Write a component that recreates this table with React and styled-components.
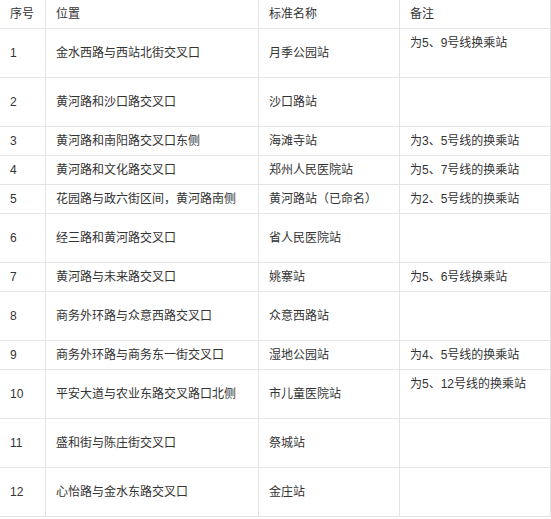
import React from 'react'
import styled, { createGlobalStyle } from 'styled-components'

const GlobalStyle = createGlobalStyle`
  html, body {
    margin: 0;
    padding: 0;
    background: #fff;
  }
  body {
    font-family: "Liberation Sans", "Noto Sans CJK SC", sans-serif;
    font-size: 12px;
    color: #333;
  }
`

const Table = styled.table`
  border-collapse: collapse;
  width: 550px;
  table-layout: fixed;
  margin-top: -1px;
  margin-left: -1px;
`

const Row = styled.tr`
  height: ${p => (p.$tall ? 49 : 29)}px;
`

const Cell = styled.td`
  border: 1px solid #e4e4e4;
  padding: 5px 10px;
  line-height: 18px;
  vertical-align: ${p => (p.$top ? 'top' : 'middle')};
  white-space: nowrap;
  overflow: hidden;
`

const HeadCell = styled(Cell).attrs({ as: 'th' })`
  font-weight: normal;
  text-align: left;
`

const rows = [
  ['1', '金水西路与西站北街交叉口', '月季公园站', '为5、9号线换乘站', true, true],
  ['2', '黄河路和沙口路交叉口', '沙口路站', '', true],
  ['3', '黄河路和南阳路交叉口东侧', '海滩寺站', '为3、5号线的换乘站'],
  ['4', '黄河路和文化路交叉口', '郑州人民医院站', '为5、7号线的换乘站'],
  ['5', '花园路与政六街区间，黄河路南侧', '黄河路站（已命名）', '为2、5号线的换乘站'],
  ['6', '经三路和黄河路交叉口', '省人民医院站', '', true],
  ['7', '黄河路与未来路交叉口', '姚寨站', '为5、6号线换乘站'],
  ['8', '商务外环路与众意西路交叉口', '众意西路站', '', true],
  ['9', '商务外环路与商务东一街交叉口', '湿地公园站', '为4、5号线的换乘站'],
  ['10', '平安大道与农业东路交叉路口北侧', '市儿童医院站', '为5、12号线的换乘站', true, true],
  ['11', '盛和街与陈庄街交叉口', '祭城站', '', true],
  ['12', '心怡路与金水东路交叉口', '金庄站', '', true],
]

const App = () => {
  return (
    <>
      <GlobalStyle />
      <Table>
        <colgroup>
          <col style={{ width: 46 }} />
          <col style={{ width: 213 }} />
          <col style={{ width: 141 }} />
          <col style={{ width: 151 }} />
        </colgroup>
        <thead>
          <Row>
            <HeadCell>序号</HeadCell>
            <HeadCell>位置</HeadCell>
            <HeadCell>标准名称</HeadCell>
            <HeadCell>备注</HeadCell>
          </Row>
        </thead>
        <tbody>
          {rows.map(([no, place, name, note, tall, top]) => (
            <Row key={no} $tall={tall}>
              <Cell>{no}</Cell>
              <Cell>{place}</Cell>
              <Cell>{name}</Cell>
              <Cell $top={top}>{note}</Cell>
            </Row>
          ))}
        </tbody>
      </Table>
    </>
  )
}

export default App
